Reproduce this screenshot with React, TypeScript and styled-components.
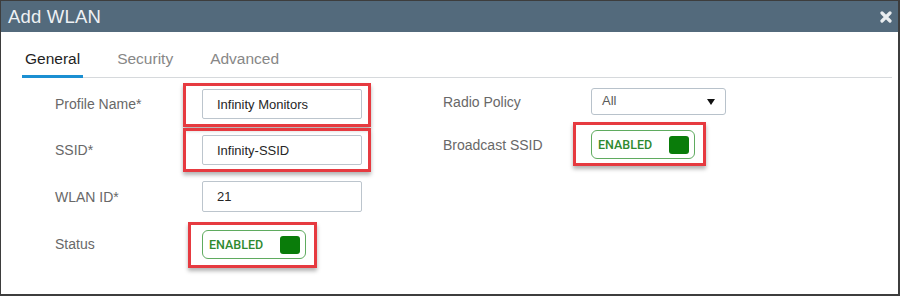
import styled, { createGlobalStyle } from "styled-components";

const GlobalStyle = createGlobalStyle`
  html, body {
    margin: 0;
    padding: 0;
    background: #ffffff;
  }
  body {
    font-family: "Liberation Sans", Arial, sans-serif;
  }
  * {
    box-sizing: border-box;
  }
`;

const tabs = ["General", "Security", "Advanced"];

const CloseIcon = () => (
  <svg width="12" height="12" viewBox="0 0 12 12">
    <path
      d="M2 2 L10 10 M10 2 L2 10"
      stroke="#e9edf0"
      strokeWidth="3.2"
      strokeLinecap="round"
    />
  </svg>
);

const Toggle = () => (
  <ToggleBox>
    <span>ENABLED</span>
    <Knob />
  </ToggleBox>
);

const App = () => {
  return (
    <>
      <GlobalStyle />
      <Frame>
        <TitleBar>
          <Title>Add WLAN</Title>
          <CloseIcon />
        </TitleBar>
        <Body>
          <TabBar>
            {tabs.map((t, i) => (
              <Tab key={t} $active={i === 0}>
                {t}
              </Tab>
            ))}
          </TabBar>
          <Form>
            <FieldGrid $labelWidth={147} $controlWidth={160}>
              <Label>Profile Name*</Label>
              <Highlight $t={6} $r={9} $b={8} $l={19}>
                <TextInput readOnly value="Infinity Monitors" />
              </Highlight>

              <Label>SSID*</Label>
              <Highlight $t={7} $r={9} $b={7} $l={19}>
                <TextInput readOnly value="Infinity-SSID" />
              </Highlight>

              <Label>WLAN ID*</Label>
              <TextInput readOnly value="21" $tall />

              <Label>Status</Label>
              <Highlight $t={8} $r={11} $b={9} $l={14} $shift={2}>
                <Toggle />
              </Highlight>
            </FieldGrid>

            <FieldGrid $labelWidth={148} $controlWidth={135} $gap={15} $raise>
              <Label>Radio Policy</Label>
              <Select>
                <span>All</span>
                <svg width="8" height="6" viewBox="0 0 8 6">
                  <path d="M0 0 L8 0 L4 6 Z" fill="#111" />
                </svg>
              </Select>

              <Label>Broadcast SSID</Label>
              <Highlight $t={8} $r={11} $b={7} $l={18}>
                <Toggle />
              </Highlight>
            </FieldGrid>
          </Form>
        </Body>
      </Frame>
    </>
  );
};

const Frame = styled.div`
  width: 900px;
  height: 296px;
  display: flex;
  flex-direction: column;
  border-style: solid;
  border-color: #3d3d3d;
  border-width: 1px 2px 2px 1px;
  background: #ffffff;
  overflow: hidden;
`;

const TitleBar = styled.div`
  height: 31px;
  flex: none;
  display: flex;
  align-items: center;
  justify-content: space-between;
  padding: 0 6px 0 7px;
  background: #536a7c;
`;

const Title = styled.h1`
  margin: 0;
  font-size: 18.5px;
  font-weight: 400;
  color: #eef1f4;
  letter-spacing: 0.2px;
`;

const Body = styled.div`
  flex: 1;
  padding: 0 6px 0 21px;
`;

const TabBar = styled.div`
  margin-top: 18px;
  display: flex;
  gap: 31px;
  border-bottom: 1px solid #d6d9dc;
`;

const Tab = styled.div<{ $active?: boolean }>`
  padding: 0 3px 7px;
  margin-bottom: -1px;
  font-size: 15.5px;
  line-height: 18px;
  color: ${(p) => (p.$active ? "#1f1f1f" : "#878787")};
  border-bottom: 3px solid ${(p) => (p.$active ? "#1b8fd2" : "transparent")};
`;

const Form = styled.div`
  display: flex;
  align-items: flex-start;
  gap: 81px;
  margin-top: 11px;
  padding-left: 33px;
`;

const FieldGrid = styled.div<{
  $labelWidth: number;
  $controlWidth: number;
  $gap?: number;
  $raise?: boolean;
}>`
  display: grid;
  grid-template-columns: ${(p) => `${p.$labelWidth}px ${p.$controlWidth}px`};
  row-gap: ${(p) => p.$gap ?? 16}px;
  align-items: center;
  margin-top: ${(p) => (p.$raise ? -1 : 0)}px;
`;

const Label = styled.label`
  font-size: 14px;
  color: #686868;
`;

const Highlight = styled.div<{
  $t: number;
  $r: number;
  $b: number;
  $l: number;
  $shift?: number;
}>`
  position: relative;
  justify-self: start;
  margin-top: ${(p) => p.$shift ?? 0}px;

  &::after {
    content: "";
    position: absolute;
    top: ${(p) => -p.$t}px;
    right: ${(p) => -p.$r}px;
    bottom: ${(p) => -p.$b}px;
    left: ${(p) => -p.$l}px;
    border: 3px solid #e63a40;
    box-shadow: 0 3px 4px rgba(0, 0, 0, 0.3);
    pointer-events: none;
  }
`;

const TextInput = styled.input<{ $tall?: boolean }>`
  display: block;
  width: 160px;
  height: ${(p) => (p.$tall ? 31 : 30)}px;
  padding: 0 14px;
  border: 1px solid #bcc5cd;
  border-radius: 2px;
  font-family: "Liberation Sans", Arial, sans-serif;
  font-size: 13px;
  color: #262626;
  background: #ffffff;
  outline: none;
`;

const Select = styled.div`
  height: 27px;
  display: flex;
  align-items: center;
  justify-content: space-between;
  padding: 0 10px 0 10px;
  border: 1px solid #b8c2cb;
  border-radius: 3px;
  font-size: 13px;
  color: #5a5a5a;

  span {
    margin-top: -3px;
  }
`;

const ToggleBox = styled.div`
  width: 104px;
  height: 29px;
  display: flex;
  align-items: center;
  justify-content: space-between;
  padding: 0 5px 0 6px;
  border: 1px solid #5fab5f;
  border-radius: 6px;
  background: #ffffff;

  span {
    font-family: Roboto, "Liberation Sans", Arial, sans-serif;
    font-size: 12.5px;
    font-weight: 500;
    color: #2f8a2f;
  }
`;

const Knob = styled.div`
  width: 20px;
  height: 18px;
  border-radius: 3px;
  background: #0a7c0a;
`;

export default App;
